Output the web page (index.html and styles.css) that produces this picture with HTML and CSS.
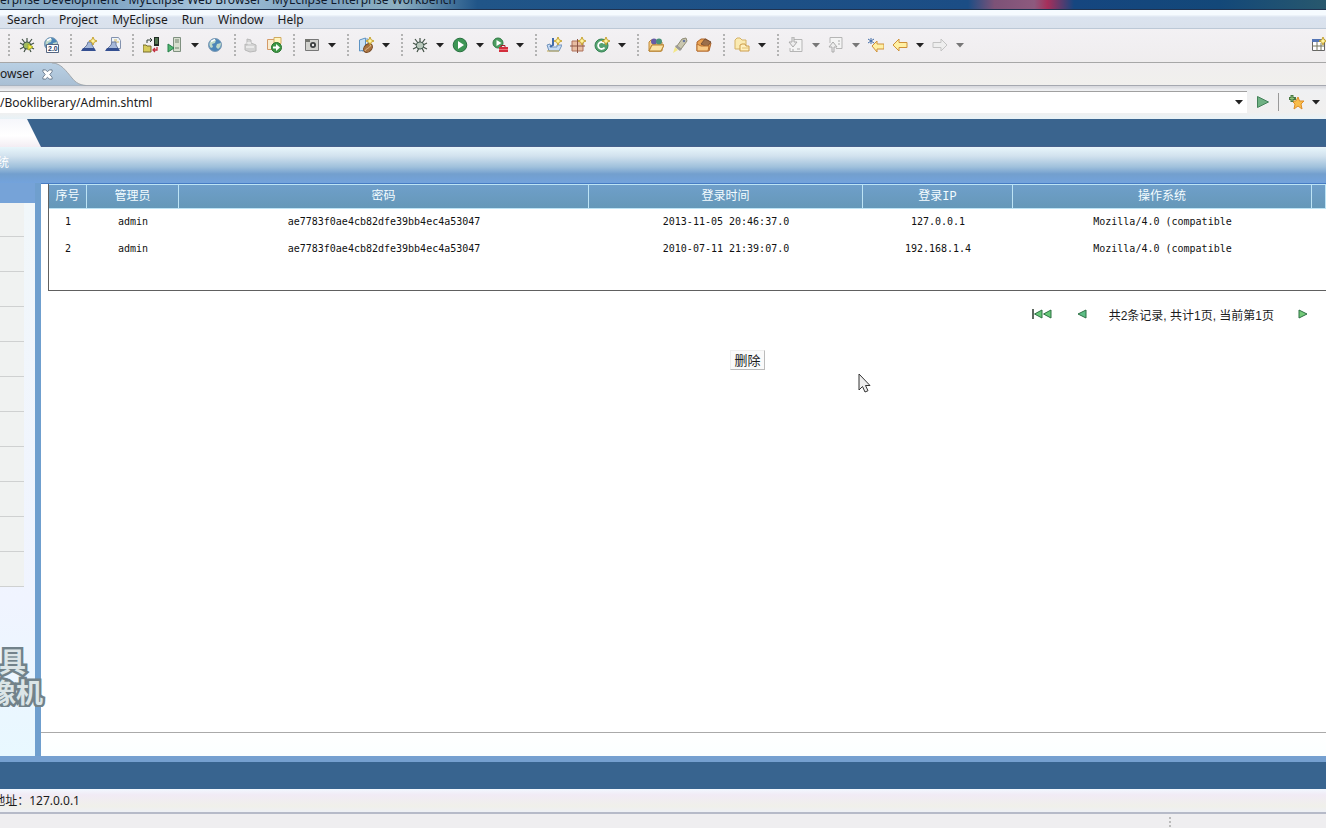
FILE: index.html
```
<!DOCTYPE html>
<html lang="zh-CN">
<head>
<meta charset="utf-8">
<title>MyEclipse Web Browser</title>
<link rel="stylesheet" href="styles.css">
</head>
<body>
<svg class="defs" aria-hidden="true">
  <symbol id="spark" viewBox="0 0 8 8"><path d="M4 0 5.200 2.800 8 4 5.200 5.200 4 8 2.800 5.200 0 4 2.800 2.800z" fill="#fff3a0" stroke="#c09a20" stroke-width=".9"/></symbol>
  <symbol id="down" viewBox="0 0 8 5"><path d="M0 0h8L4 4.500z"/></symbol>
  <symbol id="bug" viewBox="0 0 16 16"><path d="M3 2l3 4M8 1v4M13 2l-3 4M1 6l4 2M15 6l-4 2M1 12l4-2M15 12l-4-2M5 15l2-4M12 15l-2-4" stroke="#435246" stroke-width="1.200"/><ellipse cx="8" cy="8.500" rx="3.800" ry="3.600" stroke="#3e554b"/></symbol>
  <symbol id="globe" viewBox="0 0 16 16"><circle cx="8" cy="8" r="6.500" fill="#4c86b8" stroke="#7d9bb5"/><path d="M3 5c2-3 5-3 6-2l-1 3-3 1 1 3-2 1c-2-2-2-4-1-6zM10 7l4-1c0 3-1 5-3 6l-2-2z" fill="#bfd9c9"/><path d="M4 4.500l4-2" stroke="#fff" stroke-width="1.500"/></symbol>
  <symbol id="wizard" viewBox="0 0 16 16"><path d="M7 5h4v3l3 5H1l5-5z" fill="#a5b8d9" stroke="#6c7c9f"/><path d="M2 11h11l2 3H0z" fill="#344f91"/></symbol>
  <symbol id="folder" viewBox="0 0 16 16"><path d="M1 14V5l2-2h4l2 2h5v9z" fill="#f6cf85" stroke="#c08a3c"/><path d="M1 14l3-6h12l-3 6z" fill="#fbe3a4" stroke="#b98534"/></symbol>
  <symbol id="arrow" viewBox="0 0 16 16"><path d="M1 8l6-6v3.500h8v5H7V14z"/></symbol>
</svg>

<header class="titlebar"><span>erprise Development - MyEclipse Web Browser - MyEclipse Enterprise Workbench</span></header>
<nav class="menubar">
  <button>Search</button><button>Project</button><button>MyEclipse</button><button>Run</button><button>Window</button><button>Help</button>
</nav>

<div class="toolbar">
  <i class="sep first"></i>
  <button class="tool" aria-label="Debug server"><svg viewBox="0 0 16 16"><use href="#bug" fill="#9fbb62"/><path d="M9 7l5 3-5 3z" fill="#f5ed45" stroke="#a9ad2d"/></svg></button>
  <button class="tool" aria-label="Web 2.0 browser"><svg viewBox="0 0 16 16"><use href="#globe" y="-1"/><path d="M3.500 7.500h12v8h-12z" fill="#fff" stroke="#566782"/><text x="5" y="14" class="tiny">2.0</text></svg></button>
  <i class="sep"></i>
  <button class="tool" aria-label="New wizard"><svg viewBox="0 0 16 16"><use href="#wizard"/><use href="#spark" x="8" y="0" width="8" height="8"/></svg></button>
  <button class="tool" aria-label="Page wizard"><svg viewBox="0 0 16 16"><path d="M6.500.5h7l2 3v8h-9z" fill="#eef4fb" stroke="#8392ae"/><path d="M9 3h3M9 5h5" stroke="#d5b856"/><use href="#wizard"/></svg></button>
  <i class="sep"></i>
  <button class="tool" aria-label="Deploy"><svg viewBox="0 0 16 16"><path d="M11 0h5v9h-5z" fill="#202b24"/><path d="M12 2h3M12 4h3M12 6h3" stroke="#83bc7d"/><path d="M0 15V8h3l1 1h4v6z" fill="#d7cb5b" stroke="#756b2d"/><path d="M4 6V3h4M7 1l2 2-2 2" stroke="#34423a" fill="none"/><path d="M14 10v3h-4M12 11l-2 2 2 2" stroke="#c12d3e" fill="none" stroke-width="1.300"/></svg></button>
  <button class="tool" aria-label="Start server"><svg viewBox="0 0 16 16"><path d="M6.500.5h7v14h-7z" fill="#d8dfcf" stroke="#7f9080"/><path d="M8 3h4M8 5h4M8 11h4" stroke="#71836e"/><path d="M1 7l6 4-6 4z" fill="#4eb56f" stroke="#27804a"/></svg></button>
  <button class="drop" aria-label="Server list"><svg><use href="#down"/></svg></button>
  <button class="tool" aria-label="Browser"><svg viewBox="0 0 16 16"><use href="#globe"/></svg></button>
  <i class="sep tight"></i>
  <button class="tool" aria-label="Publish" disabled><svg viewBox="0 0 16 16"><path d="M3 13V7l2 1V2l4 1v3l5 2v6l-6 1z" fill="#d3d3d3" stroke="#b8b8b8"/><path d="M5 6h4M4 10h8" stroke="#fff"/></svg></button>
  <button class="tool" aria-label="Export report"><svg viewBox="0 0 16 16"><path d="M1.500 2.500h11v10h-11z" fill="#f8ecd0" stroke="#d49a67"/><path d="M8 .5h7v6H8z" fill="#fff4bd" stroke="#d1ab60"/><circle cx="10.500" cy="10.500" r="5" fill="#3e9845" stroke="#26732d"/><path d="M7 9.500h3V7l4 3.500-4 3.500v-2.500H7z" fill="#fff"/></svg></button>
  <i class="sep"></i>
  <button class="tool" aria-label="Capture"><svg viewBox="0 0 16 16"><path d="M1.500 2.500h13v11h-13z" fill="#d2d2ce" stroke="#777"/><path d="M1 2h5v3H1z" fill="#73746f"/><circle cx="9" cy="8" r="3" fill="#3b3d3e"/><circle cx="9" cy="8" r="1.200" fill="#eee"/></svg></button>
  <button class="drop" aria-label="Capture list"><svg><use href="#down"/></svg></button>
  <i class="sep"></i>
  <button class="tool" aria-label="New bean"><svg viewBox="0 0 16 16"><path d="M1.500 3l6-2v12l-6 1z" fill="#c9e1f6" stroke="#5d93c3"/><path d="M7 2h3v12H4" fill="none" stroke="#6e9dc8"/><ellipse cx="10" cy="11" rx="5" ry="3.700" transform="rotate(-45 10 11)" fill="#a9723f" stroke="#754822"/><path d="M7 14c1-3 4-2 6-6" stroke="#e5c29a" fill="none"/><use href="#spark" x="8" width="8" height="8"/></svg></button>
  <button class="drop" aria-label="Bean list"><svg><use href="#down"/></svg></button>
  <i class="sep"></i>
  <button class="tool" aria-label="Debug"><svg viewBox="0 0 16 16"><use href="#bug" fill="#b9c8bc"/></svg></button>
  <button class="drop" aria-label="Debug list"><svg><use href="#down"/></svg></button>
  <button class="tool" aria-label="Run"><svg viewBox="0 0 16 16"><circle cx="8" cy="8" r="6.800" fill="#3d9655" stroke="#287040"/><path d="M6 4l6 4-6 4z" fill="#fff"/></svg></button>
  <button class="drop" aria-label="Run list"><svg><use href="#down"/></svg></button>
  <button class="tool" aria-label="External tools"><svg viewBox="0 0 16 16"><circle cx="6" cy="6" r="5" fill="#4b9d60" stroke="#317b46"/><path d="M4.500 3l5 3-5 3z" fill="#fff"/><path d="M9 10V8.500h4V10" fill="none" stroke="#a0202d"/><path d="M7 10h9v5H7z" fill="#d32e3c"/><path d="M7 12.500h9" stroke="#fba9a8" stroke-width=".6"/></svg></button>
  <button class="drop" aria-label="External tools list"><svg><use href="#down"/></svg></button>
  <i class="sep"></i>
  <button class="tool" aria-label="New Java project"><svg viewBox="0 0 16 16"><path d="M1 8l2 6h10l3-6h-5v2H5L4 7z" fill="#c6dbf5" stroke="#7294bc"/><path d="M7 1v7l-3 2" stroke="#426caa" stroke-width="2" fill="none"/><path d="M1 14h12" stroke="#c1a74f"/><use href="#spark" x="8" width="8" height="8"/></svg></button>
  <button class="tool" aria-label="New package"><svg viewBox="0 0 16 16"><path d="M2 4h11v10H2z" fill="#e8bda2" stroke="#ad715b"/><path d="M7.500 2v14M0 9h15" stroke="#8b5445"/><use href="#spark" x="8" width="8" height="8"/></svg></button>
  <button class="tool" aria-label="New class"><svg viewBox="0 0 16 16"><circle cx="7.500" cy="8.500" r="6.500" fill="#55a270" stroke="#348253"/><path d="M10.500 6.500A3.500 3.500 0 1 0 10.500 10.500" fill="none" stroke="#fff" stroke-width="1.800"/><use href="#spark" x="8" width="8" height="8"/></svg></button>
  <button class="drop" aria-label="Class list"><svg><use href="#down"/></svg></button>
  <i class="sep"></i>
  <button class="tool" aria-label="Open type"><svg viewBox="0 0 16 16"><use href="#folder"/><circle cx="6" cy="4.500" r="3" fill="#665ca5"/><circle cx="11" cy="4.500" r="3" fill="#4a9279"/><path d="M1 14l3-6h12l-3 6z" fill="#fbe3a4" stroke="#b98534"/></svg></button>
  <button class="tool" aria-label="Search"><svg viewBox="0 0 16 16"><path d="M5 9l5-7 4-1 1 3-6 8z" fill="#cac7b0" stroke="#908c75"/><path d="M4 8l6 4-2 2-5-4z" fill="#9c9a96"/><path d="M3 10l3 3-5 3z" fill="#f3e787"/><circle cx="12" cy="4" r="1.300" fill="#6877a0"/></svg></button>
  <button class="tool" aria-label="Open file"><svg viewBox="0 0 16 16"><path d="M1 14V5l4-3h5l5 4-2 8z" fill="#eaa252" stroke="#ad642c"/><path d="M5 7l4-5 6 3-4 5z" fill="#9b6f4b" stroke="#785034"/><path d="M1 7l4 2h8l-1 5H1z" fill="#f9ca86" stroke="#b9702e"/></svg></button>
  <i class="sep"></i>
  <button class="tool" aria-label="Working folder"><svg viewBox="0 0 16 16"><path d="M1 12V3l2-2h3l2 2h4v9z" fill="#faeab2" stroke="#d4b164"/><path d="M6 14V8l2-1h3l1 2h3v5z" fill="#fff0bd" stroke="#cb9c4b"/><path d="M8 11h7" stroke="#dfbf72"/></svg></button>
  <button class="drop" aria-label="Folder list"><svg><use href="#down"/></svg></button>
  <i class="sep"></i>
  <button class="tool" aria-label="Next annotation" disabled><svg viewBox="0 0 16 16"><path d="M4 2.500h10v12H2V11" fill="#f4f4f4" stroke="#b5b5b5"/><path d="M4 0v5H1l4 5 4-5H6V0z" fill="#eee" stroke="#aaa"/><path d="M9 12h3M4 13h2" stroke="#aaa"/></svg></button>
  <button class="drop dim" aria-label="Next list"><svg><use href="#down"/></svg></button>
  <button class="tool" aria-label="Previous annotation" disabled><svg viewBox="0 0 16 16"><path d="M2 6V.5h12v11H8" fill="#f4f4f4" stroke="#b5b5b5"/><path d="M4 15v-5H1l4-5 4 5H6v5z" fill="#eee" stroke="#aaa"/><path d="M10 4h2M10 7h2" stroke="#aaa"/></svg></button>
  <button class="drop dim" aria-label="Previous list"><svg><use href="#down"/></svg></button>
  <button class="tool" aria-label="Last edit"><svg viewBox="0 0 16 16"><path d="M4 9l5-5v3h7v5H9v3z" fill="#fff0a4" stroke="#cf9138"/><path d="M3 1v6M0 2l6 4M6 2L0 6" stroke="#416ca8"/></svg></button>
  <button class="tool" aria-label="Back"><svg viewBox="0 0 16 16"><use href="#arrow" fill="#fff0a4" stroke="#cf9138"/></svg></button>
  <button class="drop" aria-label="Back list"><svg><use href="#down"/></svg></button>
  <button class="tool flip" aria-label="Forward" disabled><svg viewBox="0 0 16 16"><use href="#arrow" fill="#eee" stroke="#c3c3c3"/></svg></button>
  <button class="drop dim" aria-label="Forward list"><svg><use href="#down"/></svg></button>
  <button class="tool perspective" aria-label="Open perspective"><svg viewBox="0 0 16 16"><path d="M1.500 2.500h12v11h-12z" fill="#fff" stroke="#666"/><path d="M1 2h10v3H1z" fill="#5475b5"/><path d="M6 5v9M1 9h12M10 6v7" stroke="#77775f"/><use href="#spark" x="8" width="8" height="8"/></svg></button>
</div>

<div class="tabs">
  <svg class="tabshape" viewBox="0 0 90 23" aria-hidden="true"><defs><linearGradient id="tg" x2="0" y2="1"><stop stop-color="#b9d0e4"/><stop offset="1" stop-color="#a9bfd4"/></linearGradient></defs><path d="M0 0h52c9 0 14 8 20 15 4 5 8 7 14 7.500H0z" fill="url(#tg)"/><path d="M52 0c9 0 14 8 20 15 4 5 8 7 14 7.500" fill="none" stroke="#a2a8ae"/></svg>
  <div class="tab"><span>owser</span><button class="close" aria-label="Close tab"><svg viewBox="0 0 12 12"><path d="M1 1h3l2 2 2-2h3v2L8.500 6 11 9v2H8L6 9l-2 2H1V9l2.500-3L1 3z" fill="#fff" stroke="#69788a"/></svg></button></div>
</div>

<form class="address">
  <input type="text" aria-label="Address" value="/Bookliberary/Admin.shtml">
  <button type="button" class="drop combo" aria-label="Address history"><svg><use href="#down"/></svg></button>
  <button type="button" class="tool go" aria-label="Go"><svg viewBox="0 0 16 16"><path d="M2.500 2.500l11 5.500-11 5.500z" fill="#6fb183" stroke="#438159"/></svg></button>
  <i class="divider"></i>
  <button type="button" class="tool" aria-label="Add favorite"><svg viewBox="0 0 16 16"><path d="M10 3l1.500 4H16l-3 3 1 5-4-3-4 3 1-5-3-3h4z" fill="#f8bd4b" stroke="#df8e27"/><path d="M4 1v7M1 4.500h7" stroke="#487844" stroke-width="3"/><path d="M4 2v5M2 4.500h4" stroke="#90c278"/></svg></button>
  <button type="button" class="drop" aria-label="Favorites"><svg><use href="#down"/></svg></button>
</form>

<div class="banner"><div class="slant"></div></div>
<div class="ribbon"><span>系统</span></div>

<div class="workspace">
  <aside class="sidebar">
    <ul><li></li><li></li><li></li><li></li><li></li><li></li><li></li><li></li><li></li><li></li><li></li></ul>
    <div class="watermark"><span class="mark-top">工具</span><span class="mark-bottom">录像机</span></div>
  </aside>
  <main class="content">
    <div class="sheet">
      <table>
        <colgroup><col class="c-num"><col class="c-admin"><col><col class="c-time"><col class="c-ip"><col class="c-os"><col class="c-rest"></colgroup>
        <thead><tr><th>序号</th><th>管理员</th><th>密码</th><th>登录时间</th><th>登录IP</th><th>操作系统</th><th></th></tr></thead>
        <tbody>
          <tr><td>1</td><td>admin</td><td>ae7783f0ae4cb82dfe39bb4ec4a53047</td><td>2013-11-05 20:46:37.0</td><td>127.0.0.1</td><td>Mozilla/4.0 (compatible</td><td></td></tr>
          <tr><td>2</td><td>admin</td><td>ae7783f0ae4cb82dfe39bb4ec4a53047</td><td>2010-07-11 21:39:07.0</td><td>192.168.1.4</td><td>Mozilla/4.0 (compatible</td><td></td></tr>
        </tbody>
      </table>
    </div>
    <div class="pager">
      <button aria-label="第一页"><svg class="wide" viewBox="0 0 20 10"><path d="M1 0v10" stroke="#28382c" stroke-width="1.500"/><path d="M10 1v8L2.500 5zM19 1v8l-7.500-4z" fill="#67c878" stroke="#2e7045"/></svg></button>
      <button aria-label="上一页"><svg viewBox="0 0 10 10"><path d="M9 1v8L1 5z" fill="#5dbd85" stroke="#2e7045"/></svg></button>
      <span>共2条记录, 共计1页, 当前第1页</span>
      <button aria-label="下一页"><svg viewBox="0 0 10 10"><path d="M1 1v8l8-4z" fill="#73c978" stroke="#2e7045"/></svg></button>
    </div>
    <div class="actions"><button>删除</button></div>
    <div class="endline"></div>
  </main>
</div>
<div class="bottomband"></div>
<div class="hoststatus"><span>地址：127.0.0.1</span></div>
<footer class="status"><i></i></footer>

<svg class="cursor" viewBox="0 0 14 21" aria-hidden="true"><path d="M1 1v16l3.500-3.500L7 19l3-1.300-2.500-5.200H12z" fill="#eee" stroke="#333"/></svg>
</body>
</html>
```
FILE: styles.css
```
* { box-sizing: border-box; }
html, body { margin: 0; height: 100%; }
body {
  display: flex;
  flex-direction: column;
  min-height: 100vh;
  overflow: hidden;
  position: relative;
  background: #f0eeef;
  color: #1c1c1c;
  font: 12px/18px "Noto Sans", "Noto Sans CJK SC", sans-serif;
}
body > * { flex: none; }
button { font: inherit; color: inherit; border: 0; padding: 0; background: none; }
svg { display: block; }
.defs { position: absolute; width: 0; height: 0; }

.titlebar {
  height: 10px;
  overflow: hidden;
  display: flex;
  align-items: flex-end;
  border-bottom: 1px solid #20324f;
  background: linear-gradient(90deg, #8eb0c8, #7fa4c4 8%, #a8c6dc 16%, #7a9fbe 24%, #8db0c2 30%, #205588 36%, #1b4d85 73%, #7d5277 75%, #8d5a7e 78%, #a62f5a 79%, #154680 81%, #134879 92%, #28586d);
}
.titlebar span { line-height: 18px; white-space: nowrap; color: #101a2c; }

.menubar {
  display: flex;
  gap: 14px;
  height: 19px;
  padding-left: 7px;
  line-height: 19px;
  border-bottom: 1px solid #bcc8d6;
  background: linear-gradient(#f6fbff 0 25%, #dbe3ef 40%, #d9e1ec);
}

.toolbar {
  display: flex;
  align-items: center;
  height: 34px;
  padding: 0 0 1px 1px;
  border-bottom: 1px solid #a7a7a7;
  background: linear-gradient(#f3f1f4, #efedee);
}
.tool { width: 24px; height: 24px; display: grid; place-items: center; flex: none; }
.tool svg { width: 16px; height: 16px; }
.drop { width: 16px; height: 24px; display: grid; place-items: center; flex: none; fill: #222; }
.drop svg { width: 8px; height: 5px; }
.dim { fill: #777; }
.flip svg { transform: scaleX(-1); }
.tiny { font: bold 7px "Liberation Sans", sans-serif; fill: #293d65; }
.sep { width: 14px; height: 22px; flex: none; background: repeating-linear-gradient(#b3b3b3 0 2px, transparent 2px 4px) 7px 0 / 2px 100% no-repeat; }
.sep.tight { width: 11px; }
.perspective { margin-left: auto; margin-right: -5px; }

.tabs { position: relative; height: 23px; border-bottom: 1px solid #a5a8b0; background: linear-gradient(#f0eeef, #f1f0ed); }
.tabshape { position: absolute; left: 0; top: 0; width: 90px; height: 23px; }
.tab { position: relative; display: flex; align-items: center; gap: 8px; height: 22px; }
.close svg { width: 11px; height: 11px; }

.address {
  display: flex;
  align-items: center;
  height: 33px;
  margin: 0;
  padding: 5px 2px 6px 0;
  background: linear-gradient(#d9dadf 0 1px, #eff0f2 4px, #f1f0ef 26px, #e8f2f7);
}
.address input {
  flex: 1;
  min-width: 0;
  height: 22px;
  border: 0;
  border-top: 1px solid #a0a0a0;
  padding: 0;
  background: #fff;
  font: inherit;
  color: inherit;
}
.address .combo { height: 22px; background: #fff; border-top: 1px solid #a0a0a0; }
.go { margin-left: 4px; }
.divider { width: 1px; height: 18px; margin: 0 5px 0 3px; background: #999; }

.banner { height: 28px; background: #3a648e; border-bottom: 1px solid #47618c; }
.slant { width: 41px; height: 28px; background: linear-gradient(#f6f7fb, #fff 60%, #f3edf3); clip-path: polygon(0 0, 27px 0, 100% 100%, 0 100%); }
.ribbon { height: 36px; background: linear-gradient(#e8f6fb, #d2e2ee 25%, #a0c1dc 55%, #739fce 75%, #73a3dc); }
.ribbon span { display: flex; justify-content: flex-end; width: 9px; overflow: hidden; white-space: nowrap; color: #fff; line-height: 32px; }

.workspace { flex: 1 0 auto; display: flex; border-bottom: 6px solid #75a0d0; }
.sidebar {
  position: relative;
  width: 41px;
  padding-top: 20px;
  border-right: 6px solid #6f9fce;
  background: linear-gradient(#76a3d8 0 20px, #f1f7fa 20px, #f0f4ff 420px, #e8f8ff);
}
.sidebar ul { list-style: none; margin: 0; padding: 0; width: 24px; background: #f0f2f1; }
.sidebar li { height: 35px; border-bottom: 1px solid #cfd1d1; }
.sidebar li:first-child { height: 34px; }
.watermark {
  position: absolute;
  left: 0;
  top: 462px;
  width: 46px;
  overflow: hidden;
  display: flex;
  flex-direction: column;
  align-items: flex-end;
  font: bold 27px/31px "Noto Sans CJK SC", sans-serif;
  white-space: nowrap;
  color: #dbe5e7;
  -webkit-text-stroke: 5px #72828a;
  paint-order: stroke fill;
}
.mark-top { margin-right: 20px; }
.mark-bottom { margin-right: 3px; }

.content { flex: 1; min-width: 0; display: flex; flex-direction: column; background: #fff; border-top: 1px solid #477cc4; }
.sheet { margin-left: 7px; height: 107px; border: 1px solid #606060; border-right: 0; border-top: 0; }
table { width: 100%; table-layout: fixed; border-collapse: separate; border-spacing: 0; }
.c-num { width: 38px; }
.c-admin { width: 92px; }
.c-time { width: 274px; }
.c-ip { width: 150px; }
.c-os { width: 299px; }
.c-rest { width: 14px; }
th, td { padding: 0; text-align: center; overflow: hidden; white-space: nowrap; }
th {
  height: 25px;
  border: 1px solid #bde4f5;
  border-width: 1px 1px 1px 0;
  padding-top: 2px;
  background: linear-gradient(#6f9fca, #6598b8);
  color: #f4fcff;
  font: 12px/21px "Liberation Mono", "Noto Sans CJK SC", monospace;
}
td { height: 27px; padding-bottom: 2px; color: #111; font: 10px/25px "DejaVu Sans Mono", monospace; }

.pager { display: flex; align-items: center; justify-content: flex-end; height: 46px; padding-right: 18px; font-family: "Liberation Sans", "Noto Sans CJK SC", sans-serif; }
.pager svg { width: 10px; height: 10px; }
.pager svg.wide { width: 20px; }
.pager button + button { margin-left: 25px; }
.pager span { margin: 0 24px 0 22px; padding-top: 3px; }
.actions { display: flex; justify-content: center; padding: 13px 0 0 128px; }
.actions button { width: 35px; height: 20px; line-height: 16px; font-size: 13px; background: #fafafa; border: 1px solid #eee; border-right-color: #bbb; border-bottom-color: #bbb; }
.endline { margin-top: auto; height: 24px; border-top: 1px solid #aaa; background: linear-gradient(#fff, #fbffff); }

.bottomband { height: 27px; background: #38648f; }
.hoststatus { height: 25px; border-bottom: 2px solid #b6bac8; background: linear-gradient(#f2f8ff, #f1ebf5 25%, #f0f0ea 75%, #eef0f5); line-height: 24px; }
.hoststatus span { display: flex; justify-content: flex-end; width: 80px; overflow: hidden; white-space: nowrap; }
.status { display: flex; justify-content: flex-end; height: 14px; padding: 3px 155px 0 0; background: #efeef0; }
.status i { width: 2px; background: repeating-linear-gradient(#bbb 0 2px, transparent 2px 4px); }
.cursor { position: absolute; left: 858px; top: 373px; width: 14px; height: 21px; }
```
